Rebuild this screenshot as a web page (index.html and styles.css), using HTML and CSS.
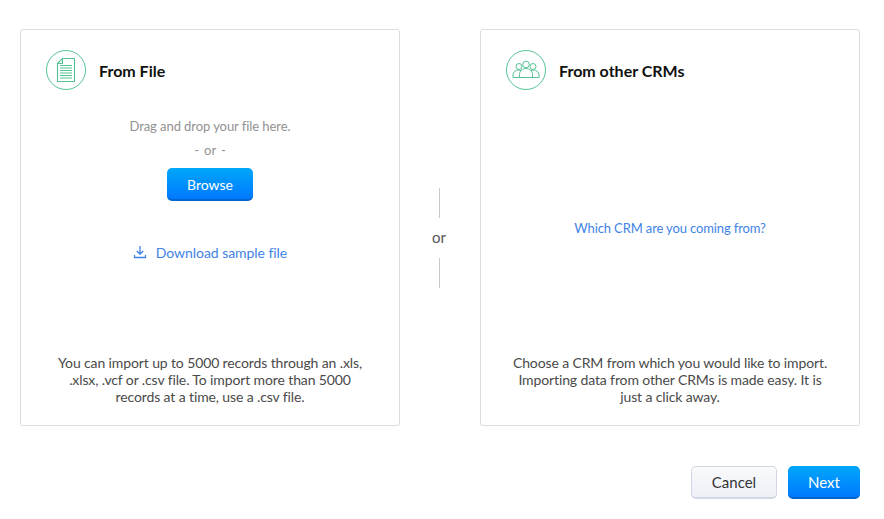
FILE: index.html
```html
<!DOCTYPE html>
<html lang="en">
<head>
<meta charset="utf-8">
<title>Import</title>
<link rel="stylesheet" href="styles.css">
</head>
<body>
<main class="page">
  <div class="panels">
    <section class="card">
      <header class="card-head">
        <span class="badge">
          <svg width="40" height="40" viewBox="0 0 40 40" fill="none" stroke="#55c292">
            <circle cx="20" cy="20" r="19.500"/>
            <path d="M16.500 8.500h12v23h-17v-18z M16.500 8.500v5h-5" stroke-width="1.100"/>
            <path d="M14 15.500h12 M14 18h12 M14 20.500h12 M14 23h12 M14 25.500h12 M14 28h12"/>
          </svg>
        </span>
        <h2 class="card-title">From File</h2>
      </header>
      <div class="file-body">
        <p class="drop">Drag and drop your file here.</p>
        <p class="sep">- &nbsp;or&nbsp; -</p>
        <button class="btn btn-primary btn-browse" type="button">Browse</button>
        <a class="download" href="#">
          <svg width="14" height="14" viewBox="0 0 14 14" fill="none" stroke="#3f83e6" stroke-width="1.300">
            <path d="M7 1v8 M3.800 6l3.200 3.200 3.200-3.200 M1.500 10v2.500h11v-2.500"/>
          </svg>
          <span>Download sample file</span>
        </a>
      </div>
      <p class="note">You can import up to 5000 records through an .xls,<br>.xlsx, .vcf or .csv file. To import more than 5000<br>records at a time, use a .csv file.</p>
    </section>
    <div class="divider">
      <span class="rule"></span>
      <span class="or">or</span>
      <span class="rule"></span>
    </div>
    <section class="card">
      <header class="card-head">
        <span class="badge">
          <svg width="40" height="40" viewBox="0 0 40 40" fill="none" stroke="#55c292">
            <circle cx="20" cy="20" r="19.500"/>
            <circle cx="20" cy="14.500" r="3.300"/>
            <circle cx="13" cy="16.500" r="3"/>
            <circle cx="27" cy="16.500" r="3"/>
            <path d="M7 27.500v-2.500c0-3 2.500-5 5.500-5 1 0 2 .2 2.800.8 M33 27.500v-2.500c0-3-2.500-5-5.500-5-1 0-2 .2-2.800.8"/>
            <path d="M13.500 27.500v-3c0-3.500 3-6 6.500-6s6.500 2.500 6.500 6v3"/>
            <path d="M7 27.500h26"/>
          </svg>
        </span>
        <h2 class="card-title">From other CRMs</h2>
      </header>
      <div class="crm-body">
        <a class="crm-link" href="#">Which CRM are you coming from?</a>
      </div>
      <p class="note">Choose a CRM from which you would like to import.<br>Importing data from other CRMs is made easy. It is<br>just a click away.</p>
    </section>
  </div>
  <footer class="actions">
    <button class="btn btn-secondary" type="button">Cancel</button>
    <button class="btn btn-primary btn-next" type="button">Next</button>
  </footer>
</main>
</body>
</html>
```
FILE: styles.css
```css
* { box-sizing: border-box; }
html, body { margin: 0; padding: 0; background: #fff; }
body { font-family: Lato, "Liberation Sans", sans-serif; color: #222; overflow: hidden; }
.page { width: 884px; height: 519px; padding: 29px 24px 0 20px; }
.panels { display: flex; height: 397px; }
.card {
  width: 380px;
  border: 1px solid #dcdcdc;
  border-radius: 3px;
  display: flex;
  flex-direction: column;
  background: #fff;
}
.card-head { display: flex; align-items: center; padding: 20px 25px 0; height: 60px; flex: none; }
.badge { display: block; width: 40px; height: 40px; flex: none; }
.badge svg { display: block; }
.card-title { margin: 2px 0 0 13px; font-size: 16px; font-weight: 700; color: #111; line-height: 20px; }
.file-body { flex: 1; display: flex; flex-direction: column; align-items: center; padding-top: 27px; }
.drop { margin: 0; font-size: 13px; line-height: 18px; color: #929292; letter-spacing: -0.07px; }
.sep { margin: 6px 0 0; font-size: 13px; line-height: 18px; color: #929292; word-spacing: -0.8px; }
.btn {
  font-family: inherit;
  border-radius: 5px;
  font-size: 15px;
  padding: 0;
  cursor: pointer;
}
.btn-primary {
  color: #fff;
  border: 0;
  border-bottom: 2px solid #0065cf;
  background: linear-gradient(#00a7f9, #0079ff);
}
.btn-browse { width: 86px; height: 33px; margin-top: 9px; padding-top: 2px; font-size: 14px; }
.download {
  display: flex;
  align-items: center;
  gap: 9px;
  margin-top: 42px;
  font-size: 14px;
  line-height: 20px;
  color: #3f83e6;
  text-decoration: none;
  letter-spacing: -0.05px;
}
.download svg { display: block; margin-top: -3px; }
.note { margin: 0; padding: 0 20px 20px; text-align: center; font-size: 14px; line-height: 17px; color: #4a4a4a; letter-spacing: -0.12px; }
.divider { width: 80px; display: flex; flex-direction: column; align-items: center; padding-top: 159px; margin-left: -1px; margin-right: 1px; }
.rule { display: block; width: 1px; height: 30px; background: #c8c8c8; }
.or { font-size: 15px; line-height: 38px; height: 40px; color: #555; }
.crm-body { flex: 1; display: flex; justify-content: center; padding-top: 129px; }
.crm-link { font-size: 13px; line-height: 18px; color: #3f83e6; text-decoration: none; letter-spacing: -0.13px; }
.actions { display: flex; justify-content: flex-end; gap: 11px; margin-top: 40px; }
.btn-secondary {
  width: 86px;
  height: 33px;
  color: #333;
  border: 1px solid #d3d6e3;
  border-bottom-width: 2px;
  background: linear-gradient(#f9fafc, #eef0f7);
}
.btn-next { width: 72px; height: 33px; }
```
